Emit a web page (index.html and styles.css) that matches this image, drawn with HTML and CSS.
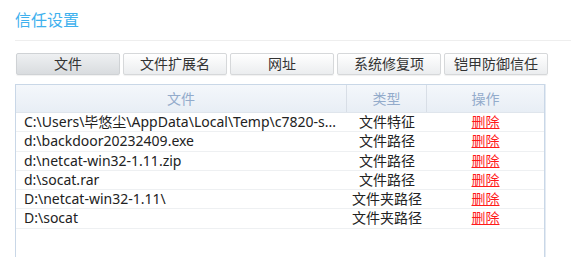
FILE: index.html
```html
<!DOCTYPE html>
<html lang="zh-CN">
<head>
  <meta charset="UTF-8">
  <title>信任设置</title>
  <link rel="stylesheet" href="styles.css">
</head>
<body>
  <div class="page">
    <h1 class="title">信任设置</h1>

    <!-- 分类按钮 -->
    <div class="tabs">
      <button class="tab active">文件</button>
      <button class="tab">文件扩展名</button>
      <button class="tab">网址</button>
      <button class="tab">系统修复项</button>
      <button class="tab">铠甲防御信任</button>
    </div>

    <!-- 信任列表 -->
    <div class="list">
      <div class="row head">
        <div class="cell path">文件</div>
        <div class="cell type">类型</div>
        <div class="cell op">操作</div>
      </div>
      <div class="row">
        <div class="cell path">C:\Users\毕悠尘\AppData\Local\Temp\c7820-s...</div>
        <div class="cell type">文件特征</div>
        <div class="cell op"><a href="#">删除</a></div>
      </div>
      <div class="row">
        <div class="cell path">d:\backdoor20232409.exe</div>
        <div class="cell type">文件路径</div>
        <div class="cell op"><a href="#">删除</a></div>
      </div>
      <div class="row">
        <div class="cell path">d:\netcat-win32-1.11.zip</div>
        <div class="cell type">文件路径</div>
        <div class="cell op"><a href="#">删除</a></div>
      </div>
      <div class="row">
        <div class="cell path">d:\socat.rar</div>
        <div class="cell type">文件路径</div>
        <div class="cell op"><a href="#">删除</a></div>
      </div>
      <div class="row">
        <div class="cell path">D:\netcat-win32-1.11\</div>
        <div class="cell type">文件夹路径</div>
        <div class="cell op"><a href="#">删除</a></div>
      </div>
      <div class="row">
        <div class="cell path">D:\socat</div>
        <div class="cell type">文件夹路径</div>
        <div class="cell op"><a href="#">删除</a></div>
      </div>
    </div>
  </div>
</body>
</html>
```

FILE: styles.css
```css
body {
  margin: 0;
  background-color: #fff;
  font-family: "Noto Sans", "Noto Sans CJK SC", sans-serif;
  color: #222;
}
.page {
  padding-left: 15px;
}
.title {
  margin: 0;
  padding: 9px 0 9px 0;
  font-size: 16px;
  line-height: 22px;
  font-weight: normal;
  color: #3fb1ee;
  border-bottom: 1px solid #eeeeee;
}
.tabs {
  display: flex;
  gap: 3px;
  margin-top: 12px;
  padding-left: 1px;
}
.tab {
  width: 104px;
  height: 22px;
  padding: 0;
  font-family: inherit;
  font-size: 14px;
  line-height: 20px;
  color: #333;
  background: linear-gradient(#ffffff, #ebedef);
  border: 1px solid #d6d8da;
  border-radius: 2px;
  box-shadow: 0 1px 1px rgba(0, 0, 0, 0.06);
  cursor: pointer;
}
.tab.active {
  background: linear-gradient(#eef0f2, #d9dcdf);
  border-color: #cfd2d5;
}
.list {
  width: 528px;
  height: 180px;
  margin-top: 9px;
  border: 1px solid #c9d7e7;
  border-bottom: none;
  box-shadow: 1px 0 0 #e4ebf3;
}
.row {
  display: grid;
  grid-template-columns: 331px 80px 117px;
  height: 19.3px;
  box-sizing: border-box;
  border-bottom: 1px solid #eef0f2;
  font-size: 14px;
  line-height: 18px;
}
.row.head {
  height: 28px;
  line-height: 27px;
  background: linear-gradient(#f4f7fb, #e8eef5);
  border-bottom: 1px solid #dfe5ec;
  color: #93abcb;
}
.cell {
  white-space: nowrap;
  overflow: hidden;
}
.cell.path {
  padding-left: 8px;
}
.row.head .cell.path {
  padding-left: 0;
  text-align: center;
}
.cell.type,
.cell.op {
  text-align: center;
}
.row.head .cell.path,
.row.head .cell.type {
  border-right: 1px solid #d8dee6;
}
.cell.op a {
  color: #ff1a1a;
}
```
